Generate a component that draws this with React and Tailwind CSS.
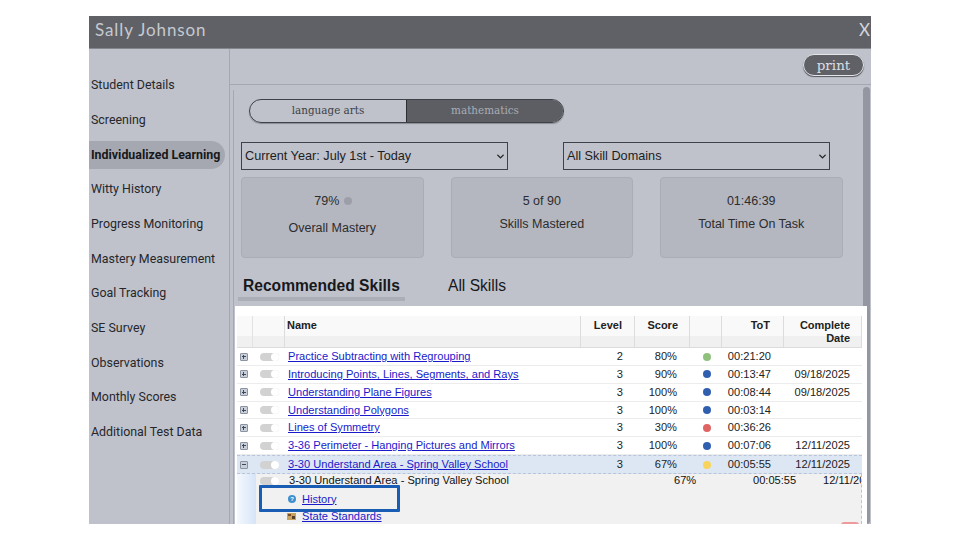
import { ChevronDown } from "lucide-react";

const navItems = [
  "Student Details",
  "Screening",
  "Individualized Learning",
  "Witty History",
  "Progress Monitoring",
  "Mastery Measurement",
  "Goal Tracking",
  "SE Survey",
  "Observations",
  "Monthly Scores",
  "Additional Test Data",
];

const skills = [
  { name: "Practice Subtracting with Regrouping", level: 2, score: "80%", dot: "bg-[#8fc17c]", tot: "00:21:20", date: "" },
  { name: "Introducing Points, Lines, Segments, and Rays", level: 3, score: "90%", dot: "bg-[#2f5fae]", tot: "00:13:47", date: "09/18/2025" },
  { name: "Understanding Plane Figures", level: 3, score: "100%", dot: "bg-[#2f5fae]", tot: "00:08:44", date: "09/18/2025" },
  { name: "Understanding Polygons", level: 3, score: "100%", dot: "bg-[#2f5fae]", tot: "00:03:14", date: "" },
  { name: "Lines of Symmetry", level: 3, score: "30%", dot: "bg-[#df6464]", tot: "00:36:26", date: "" },
  { name: "3-36 Perimeter - Hanging Pictures and Mirrors", level: 3, score: "100%", dot: "bg-[#2f5fae]", tot: "00:07:06", date: "12/11/2025" },
];

const columns = "grid grid-cols-[16px_32px_296px_54px_55px_32px_62px_78px]";

function Toggle() {
  return (
    <span className="flex h-[8px] w-[19px] items-center justify-end rounded-full bg-[#d2d2d2]">
      <span className="h-[8px] w-[8px] rounded-full bg-white" />
    </span>
  );
}

function Expander({ open }) {
  return (
    <span className="flex h-[8px] w-[8px] items-center justify-center rounded-[1px] border border-[#8b93a0] bg-[#c9d0db]">
      <span className="relative h-[1px] w-[4px] bg-[#3f4856]">
        {!open && <span className="absolute left-[1.5px] top-[-1.5px] h-[4px] w-[1px] bg-[#3f4856]" />}
      </span>
    </span>
  );
}

function SkillRow({ skill, open }) {
  return (
    <div className={`${columns} items-center text-[11.1px] leading-none text-[#222] ${open ? "h-[19px] border-y border-dashed border-[#b7c4da] bg-[#dde6f3]" : "h-[17.8px] border-b border-[#ececec]"}`}>
      <span className="flex justify-center pr-[3px]"><Expander open={open} /></span>
      <span className="flex pl-[7px]"><Toggle /></span>
      <a className="truncate pl-[3px] text-[#1a1acb] underline">{skill.name}</a>
      <span className="pr-[12px] text-right">{skill.level}</span>
      <span className="pr-[13px] text-right">{skill.score}</span>
      <span className="flex justify-center pl-[2px]"><span className={`h-[8px] w-[8px] rounded-full ${skill.dot}`} /></span>
      <span className="pr-[13px] text-right">{skill.tot}</span>
      <span className="pr-[12px] text-right">{skill.date}</span>
    </div>
  );
}

function StatCard({ value, label, dot }) {
  return (
    <div className="flex h-[81px] w-[182.5px] flex-col items-center rounded-[4px] border border-[#a9adb6] bg-[#b4b7c0] pt-[15px] text-[12.5px] leading-[16px] text-[#2c2c2e]">
      <div className={`flex items-center gap-[5px] ${dot ? "pl-[2px]" : ""}`}>
        <span>{value}</span>
        {dot && <span className="h-[8px] w-[8px] rounded-full bg-[#9c9fa8]" />}
      </div>
      <div className={dot ? "mt-[11px]" : "mt-[7px]"}>{label}</div>
    </div>
  );
}

function FakeSelect({ label }) {
  return (
    <div className="flex h-[28px] w-[267px] items-center justify-between border border-[#3f4148] pl-[3px] pr-[1px] pt-[1px] text-[12.7px] text-[#1d1d1f]">
      <span>{label}</span>
      <ChevronDown size={11} strokeWidth={3} className="text-[#222]" />
    </div>
  );
}

export default function App() {
  return (
    <div className="h-[540px] w-[960px] overflow-hidden bg-white pl-[89px] pt-[16px] font-['Liberation_Sans',sans-serif]">
      <div className="flex h-[508px] w-[782px] flex-col overflow-hidden bg-[#bfc2cb]">
        {/* Title bar */}
        <div className="flex h-[33px] shrink-0 items-center justify-between border-b border-[#85878d] bg-[#5f6166] pb-[4px] pl-[6px] pr-[1px]">
          <span className="font-['Lato',sans-serif] text-[17px] tracking-[0.9px] text-[#c6c9d0]">Sally Johnson</span>
          <span className="font-['Lato',sans-serif] text-[17px] text-[#d3d5db]">X</span>
        </div>

        <div className="flex min-h-0 flex-1">
          {/* Side nav */}
          <div className="flex w-[141px] shrink-0 flex-col border-r border-[#a5a8b0] pt-[22.5px] font-['Roboto',sans-serif] text-[12.4px] text-[#26272b]">
            {navItems.map((item) => (
              <div
                key={item}
                className={`mb-[6.7px] flex h-[28px] w-[136px] shrink-0 items-center pl-[2px] ${item === "Individualized Learning" ? "rounded-r-full bg-[#a5a8b1] font-bold text-[#17181b]" : ""}`}
              >
                {item}
              </div>
            ))}
          </div>

          <div className="flex min-w-0 flex-1 flex-col">
            {/* Toolbar */}
            <div className="flex h-[36px] shrink-0 items-start justify-end border-b border-[#a5a8b0] pr-[7px] pt-[5px]">
              <button className="h-[22px] w-[61px] rounded-full border border-[#e3e5ea] bg-[#5f6166] font-['DejaVu_Serif',serif] text-[13.5px] leading-[19px] text-[#dcdee3] shadow-[0_1px_1px_#55575c]">
                print
              </button>
            </div>

            {/* Main panel */}
            <div className="relative ml-[3px] mt-[5px] min-h-0 flex-1 border-l border-[#a5a8b0]">
              <div className="pl-[7px] pt-[9px]">
                <div className="ml-[8px] flex h-[24px] w-[315px] overflow-hidden rounded-full border border-[#3f4148] font-['DejaVu_Serif',serif] text-[10.4px] shadow-[0_1px_1px_#8a8c93]">
                  <div className="flex w-[157px] items-center justify-center border-r border-[#2d2e32] text-[#3d3f45]">language arts</div>
                  <div className="flex flex-1 items-center justify-center bg-[#5c5e64] text-[#a9acb4]">mathematics</div>
                </div>

                <div className="mt-[19px] flex gap-[55px]">
                  <FakeSelect label="Current Year: July 1st - Today" />
                  <FakeSelect label="All Skill Domains" />
                </div>

                <div className="mt-[7px] flex gap-[27px]">
                  <StatCard value="79%" label="Overall Mastery" dot />
                  <StatCard value="5 of 90" label="Skills Mastered" />
                  <StatCard value="01:46:39" label="Total Time On Task" />
                </div>

                <div className="mt-[17px] flex h-[26px] text-[15.6px] leading-[22px] text-[#17181b]">
                  <div className="ml-[-3px] h-[26px] w-[167px] border-b-[4px] border-[#abaeb7] pl-[5px] font-bold">Recommended Skills</div>
                  <div className="ml-[43px]">All Skills</div>
                </div>
              </div>

              {/* Skills table */}
              <div className="relative z-10 ml-[1px] mt-[5px] h-[218px] w-[632px] overflow-hidden bg-white pl-[2px] pt-[10px]">
                <div className={`${columns} h-[32.3px] w-[625px] border-b border-[#dcdcdc] bg-[linear-gradient(#f9f9f9_65%,#f0f0f0_65%)] text-[11px] font-bold leading-[13px] text-[#222]`}>
                  <span className="border-r border-[#e2e2e2]" />
                  <span className="border-r border-[#dcdcdc]" />
                  <span className="border-r border-[#dcdcdc] pl-[2px] pt-[3px]">Name</span>
                  <span className="border-r border-[#dcdcdc] pr-[12px] pt-[3px] text-right">Level</span>
                  <span className="border-r border-[#dcdcdc] pr-[11px] pt-[3px] text-right">Score</span>
                  <span className="border-r border-[#dcdcdc]" />
                  <span className="border-r border-[#dcdcdc] pr-[13px] pt-[3px] text-right">ToT</span>
                  <span className="border-r border-[#dcdcdc] pr-[11px] pt-[3px] text-right">Complete Date</span>
                </div>

                <div className="w-[625px]">
                  {skills.map((skill) => (
                    <SkillRow key={skill.name} skill={skill} />
                  ))}
                  <SkillRow open skill={{ name: "3-30 Understand Area - Spring Valley School", level: 3, score: "67%", dot: "bg-[#f8d45c]", tot: "00:05:55", date: "12/11/2025" }} />

                  <div className="flex h-[50px]">
                    <div className="w-[19px] shrink-0 bg-[linear-gradient(90deg,#f4f8fe,#d6e4f8)]" />
                    <div className="relative min-w-0 flex-1 overflow-hidden border-r border-dashed border-[#b7c4da] bg-[#f1f1f1] text-[11.1px] leading-none text-[#111]">
                      <div className="flex h-[13px] items-center">
                        <span className="ml-[4px] mr-[10px]"><Toggle /></span>
                        <span className="w-[385px] shrink-0">3-30 Understand Area - Spring Valley School</span>
                        <span className="w-[40px] shrink-0">67%</span>
                        <span className="w-[92px] shrink-0 pl-[39px]">00:05:55</span>
                        <span className="ml-[17px] shrink-0">12/11/2025</span>
                      </div>
                      <div className="mt-[3px] flex h-[18px] items-center pl-[32px]">
                        <span className="mr-[6px] flex h-[8px] w-[8px] items-center justify-center rounded-full bg-[#3f8fce] text-[6px] font-bold text-white">?</span>
                        <a className="text-[#1a1acb] underline">History</a>
                      </div>
                      <div className="flex h-[16px] items-center pl-[31px]">
                        <svg width="9" height="7" viewBox="0 0 9 7" className="mr-[6px]">
                          <rect width="9" height="7" fill="#c9a35f" />
                          <rect x="1" y="1" width="3" height="2" fill="#7a4b22" />
                          <rect x="5" y="3" width="3" height="3" fill="#57402a" />
                        </svg>
                        <a className="text-[#1a1acb] underline">State Standards</a>
                      </div>
                      {/* annotation box around History */}
                      <div className="absolute left-[3px] top-[11px] h-[27px] w-[141px] rounded-[1px] border-[3px] border-[#1a5db5]" />
                      <div className="absolute right-[2px] top-[48px] h-[6px] w-[18px] rounded-full bg-[#ee9a9a]" />
                    </div>
                  </div>
                </div>
              </div>

              {/* Scrollbar */}
              <div className="absolute bottom-0 right-[1px] top-[-3px] w-[7px] rounded-full bg-[#94979f]" />
            </div>
          </div>
        </div>
      </div>
    </div>
  );
}
